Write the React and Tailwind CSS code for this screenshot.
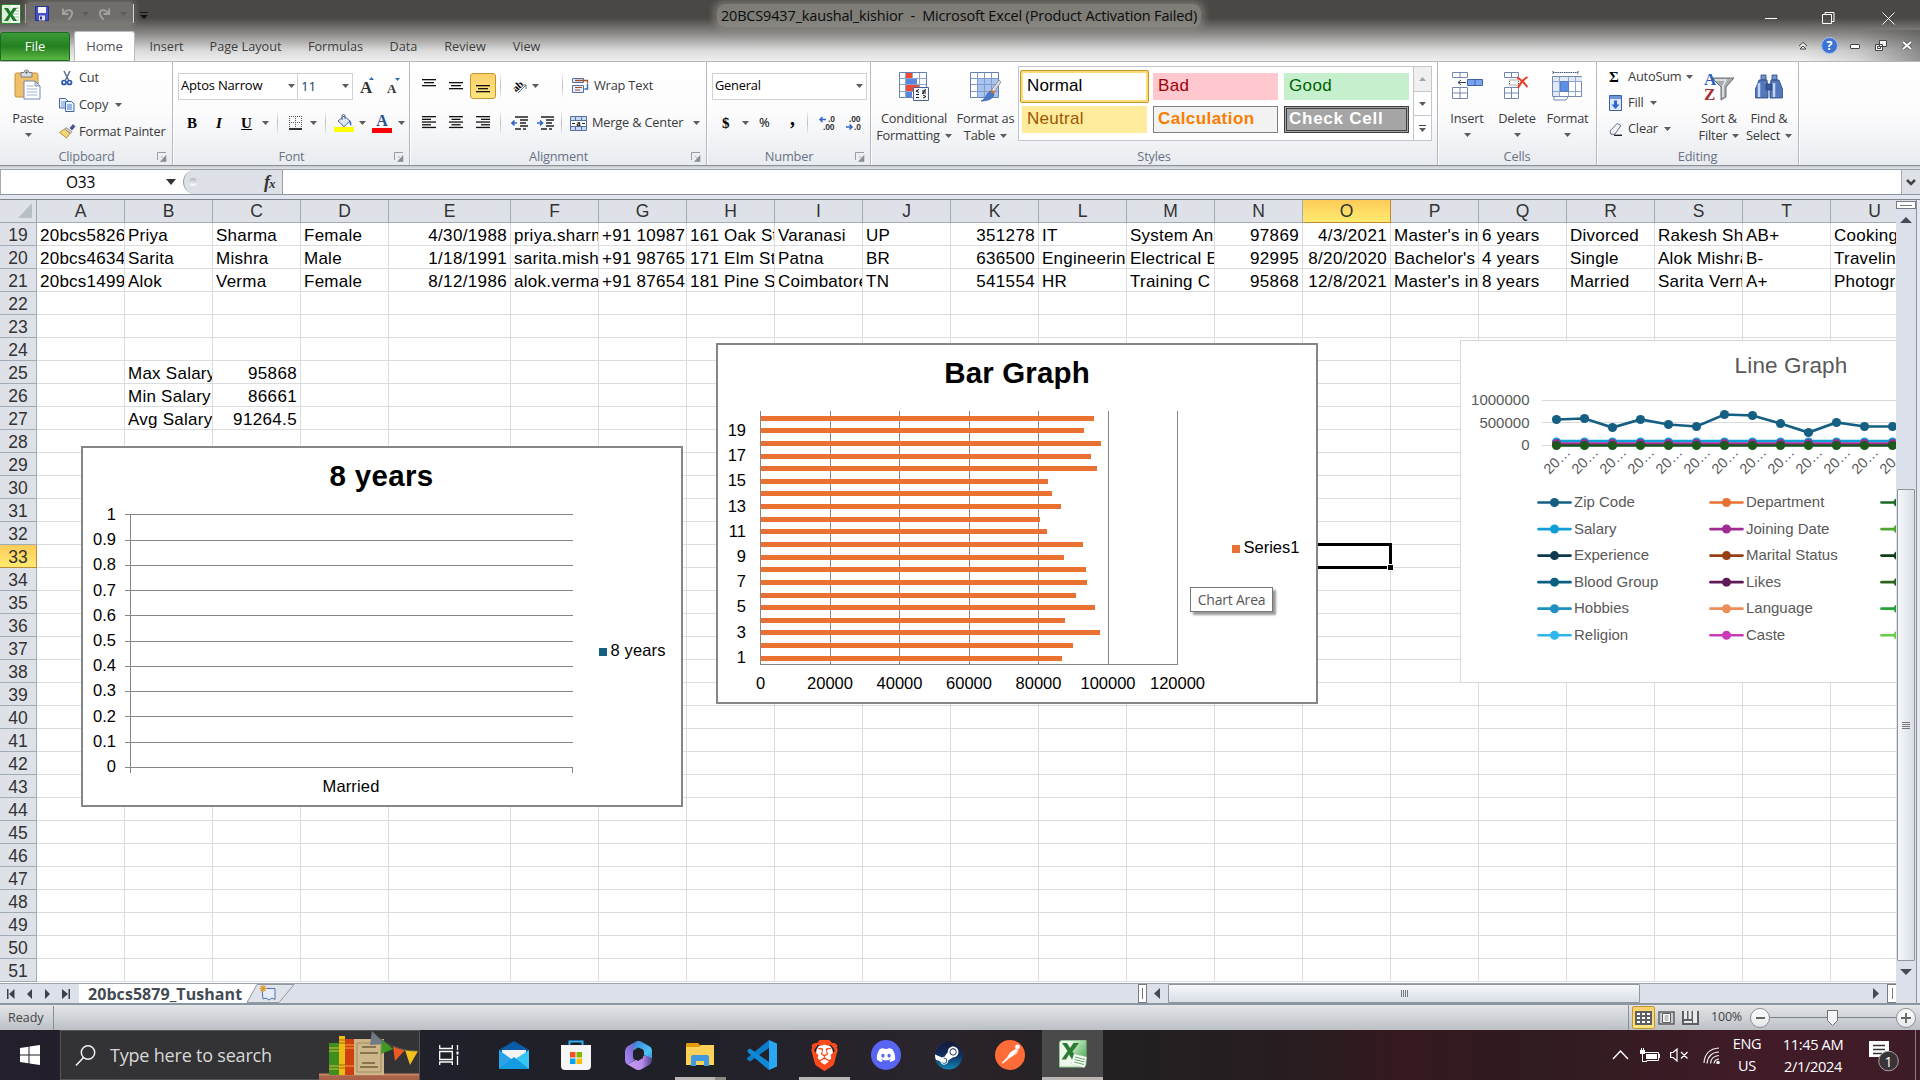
import React from 'react';
import { FaDiscord, FaSteam } from 'react-icons/fa';
import { SiBrave } from 'react-icons/si';

const UI = "font-['Open_Sans','Noto_Sans',sans-serif]";
const ARIAL = "font-['Liberation_Sans',Arial,sans-serif]";

const Caret = ({ className = '' }) => (
  <svg width="7" height="4" viewBox="0 0 7 4" className={`shrink-0 ${className}`}>
    <path d="M0 0h7L3.5 4z" fill="#5c5c5c" />
  </svg>
);

const Sep = ({ className = '' }) => (
  <div className={`h-[24px] w-px shrink-0 bg-gradient-to-b from-[#f3f4f6] via-[#b9bdc3] to-[#f3f4f6] ${className}`} />
);

const Launcher = () => (
  <svg width="10" height="10" viewBox="0 0 10 10">
    <path d="M.5 8V.5H9" stroke="#9a9da2" fill="none" />
    <path d="M4 4l3 3M9 3.500v6H3.500z" stroke="#8a8d92" fill="#8a8d92" strokeWidth=".6" />
  </svg>
);

function Group({ width, label, launcher, children }) {
  return (
    <div className={`flex h-full shrink-0 flex-col border-r border-[#b4b9c1] shadow-[1px_0_0_#fff] ${width}`}>
      <div className="h-[84px]">{children}</div>
      <div className="flex h-[20px] items-center pt-[3px]">
        <div className={`flex-1 text-center text-[12.800px] text-[#6a7285] ${launcher ? 'pl-[16px]' : ''}`}>{label}</div>
        {launcher && <div className="mr-[5px] w-[10px]"><Launcher /></div>}
      </div>
    </div>
  );
}

/* ---------- ribbon icons ---------- */
const PasteIcon = () => (
  <svg width="30" height="32" viewBox="0 0 30 32">
    <rect x="2" y="4" width="23" height="24" rx="1.500" fill="#f0bf6a" stroke="#c98f3a" />
    <path d="M8 3.500h3a2.500 2.500 0 015 0h3V8H8z" fill="#d8dbe0" stroke="#6d7480" strokeWidth=".9" />
    <circle cx="13.500" cy="3.500" r="1" fill="#444" />
    <path d="M11 12h11l5 5v13H11z" fill="#fff" stroke="#6f88b5" />
    <path d="M22 12v5h5z" fill="#cbd8ec" stroke="#6f88b5" strokeWidth=".8" />
    <path d="M13.500 17h7M13.500 20h11M13.500 23h11M13.500 26h11" stroke="#9fb3d6" />
  </svg>
);
const CutIcon = () => (
  <svg width="12" height="15" viewBox="0 0 12 15" fill="none">
    <path d="M3 0l4.500 9M9 0L4.500 9" stroke="#5c6f94" strokeWidth="1.500" />
    <circle cx="3" cy="11.500" r="2" stroke="#2b56a8" strokeWidth="1.700" />
    <circle cx="8.500" cy="11.500" r="2" stroke="#2b56a8" strokeWidth="1.700" />
  </svg>
);
const CopyIcon = () => (
  <svg width="16" height="14" viewBox="0 0 16 14">
    <path d="M.5.5h6l2.500 2.500v7H.5z" fill="#eef4fd" stroke="#3c66b0" />
    <path d="M2 4h4M2 6h4M2 8h4" stroke="#6d93d2" />
    <path d="M6.500 3.500h6L15 6v7.500H6.500z" fill="#eef4fd" stroke="#3c66b0" />
    <path d="M8 7h5M8 9h5M8 11h5" stroke="#4a78c8" />
  </svg>
);
const PainterIcon = () => (
  <svg width="17" height="15" viewBox="0 0 17 15">
    <path d="M11 4l3-3.500 2 2L13 6z" fill="#4c4f9a" stroke="#34376f" strokeWidth=".6" />
    <path d="M7 3.500l6 4-1.500 2-6-4z" fill="#c9ccd2" stroke="#777" strokeWidth=".6" />
    <path d="M5.500 5L11 9.500 7.500 14 .5 8.500z" fill="#f3d778" stroke="#a8842c" strokeWidth=".8" />
  </svg>
);
const Lines = ({ widths, align = 'left', gap = 3 }) => (
  <svg width="14" height={widths.length * gap} viewBox={`0 0 14 ${widths.length * gap}`}>
    {widths.map((w, i) => (
      <rect key={i} x={align === 'left' ? 0 : align === 'right' ? 14 - w : (14 - w) / 2} y={i * gap} width={w} height="1.300" fill="#111" />
    ))}
  </svg>
);
const IndentIcon = ({ flip }) => (
  <svg width="17" height="14" viewBox="0 0 17 14">
    <path d="M4 1h13M9 4h8M9 7h6M9 10h8M4 13h6M12 13h3" stroke="#222" strokeWidth="1.400" />
    <path d={flip ? 'M0 7h5M3 4.500L5.500 7 3 9.500' : 'M1 7h5M3.500 4.500L1 7l2.500 2.500'} stroke="#2f66c4" strokeWidth="1.600" fill="none" />
  </svg>
);
const WrapIcon = () => (
  <svg width="17" height="16" viewBox="0 0 17 16" fill="none">
    <path d="M.5.5h11v4H.5z" fill="#e7eef9" stroke="#56709f" />
    <path d="M3 2.500h12.500v3" stroke="#a0522d" strokeWidth="1.300" />
    <path d="M.5 7.500h11v7H.5z" fill="#e7eef9" stroke="#56709f" />
    <path d="M3 9.500h7M3 12h5" stroke="#a0522d" strokeWidth="1.200" />
    <path d="M15.500 6v5h-3" stroke="#2f66c4" strokeWidth="1.400" />
  </svg>
);
const MergeIcon = () => (
  <svg width="17" height="15" viewBox="0 0 17 15">
    <path d="M.5.5h16v14H.5z" fill="#c8d9f3" stroke="#56709f" />
    <path d="M1 4.500h15M1 10.500h15M5.500 1v3M11.500 1v3M5.500 11v3M11.500 11v3" stroke="#56709f" />
    <path d="M1 5h15v5H1z" fill="#fff" />
    <text x="8.500" y="10" fontSize="8" fontWeight="bold" textAnchor="middle" fontFamily="Liberation Serif, serif">a</text>
    <path d="M2 7.500h3M12 7.500h3" stroke="#222" />
  </svg>
);
const BordersIcon = () => (
  <svg width="13" height="14" viewBox="0 0 13 14">
    <path d="M.5 0v12M6.500 0v12M12.500 0v12M0 .5h13M0 6.500h13" stroke="#555" strokeDasharray="1 1" />
    <path d="M0 13h13" stroke="#000" strokeWidth="1.600" />
  </svg>
);
const BucketIcon = () => (
  <svg width="20" height="19" viewBox="0 0 20 19">
    <path d="M4 7l6-5 6 5-6 5.500z" fill="#dfe7f3" stroke="#4d6794" />
    <path d="M8 6V2a1.500 1.500 0 013 0v3" stroke="#4d6794" fill="none" />
    <path d="M15.500 6c2.500 2 2 5 1.500 6-1-1-2-3-1.500-6z" fill="#2f66c4" />
    <path d="M0 13h20v5H0z" fill="#ffff00" />
  </svg>
);
const FontColorIcon = () => (
  <svg width="20" height="19" viewBox="0 0 20 19">
    <text x="10" y="12" fontSize="16" fontWeight="bold" textAnchor="middle" fill="#2c4f93" fontFamily="Liberation Serif, serif">A</text>
    <path d="M0 14h20v5H0z" fill="#fb0007" />
  </svg>
);
const CondIcon = () => (
  <svg width="31" height="30" viewBox="0 0 31 30">
    <path d="M.5.5h27v25H.5z" fill="#fff" stroke="#6481b4" />
    <path d="M7 1h6v5H7zM7 13h13v6H7z" fill="#ee4a36" />
    <path d="M7 7h11v5H7zM7 20h6v5H7z" fill="#5a86e0" />
    <path d="M1 6.500h26M1 12.500h26M1 19.500h26M6.500 1v25M13.500 1v6M20.500 1v25" stroke="#8ea5cf" fill="none" />
    <path d="M14.500 15.500h15v13h-15z" fill="#f7f9fc" stroke="#4b628f" />
    <path d="M20 17.500l-3 1.500 3 1.500M17 22.500h3M23 19h4M23 21h4M26.500 17l-3 5M17 25.500h3M24 23l3 1.500-3 1.500" stroke="#111" fill="none" />
  </svg>
);
const TableIcon = () => (
  <svg width="31" height="30" viewBox="0 0 31 30">
    <path d="M.5.5h28v25H.5z" fill="#fff" stroke="#6481b4" />
    <path d="M7 7h21v18H7z" fill="#a9c4f1" />
    <path d="M1 6.500h27M1 12.500h27M1 19.500h27M7.500 1v25M14.500 1v25M21.500 1v25" stroke="#7f9acb" fill="none" />
    <path d="M29 8l2 2-8 12-3-2z" fill="#d9dbde" stroke="#77797d" strokeWidth=".7" />
    <path d="M20 19l4 3c-1 5-6 7-13 7 5-2 5-7 9-10z" fill="#4a78c8" stroke="#2b4f93" strokeWidth=".6" />
    <path d="M21.500 17.500l3.500 2.500-1.500 2-3.500-2.500z" fill="#c9743a" />
  </svg>
);
const InsertIcon = () => (
  <svg width="31" height="28" viewBox="0 0 31 28">
    <path d="M.5.5h15v5H.5zM8 .5v5M.5 15.500h15v11H.5zM8 15.500v11M.5 21h15" fill="#fff" stroke="#7388ae" />
    <path d="M15.500 7.500h15v6h-15zM23 7.500v6" fill="#79a5ee" stroke="#3f63a8" />
    <path d="M14 10.500H6M9 8l-3 2.500L9 13" stroke="#333f5c" fill="none" />
  </svg>
);
const DeleteIcon = () => (
  <svg width="26" height="28" viewBox="0 0 26 28">
    <path d="M.5.5h14v5H.5zM7.500.5v5M.5 15.500h14v11H.5zM7.500 15.500v11M.5 21h14" fill="#fff" stroke="#7388ae" />
    <path d="M5.500 8h9v5h-9z" stroke="#556" strokeDasharray="1 1" fill="none" />
    <path d="M13 5.500C17 7 20 11 23.500 15M23.500 5C19 8 16 11 14 16" stroke="#e8402a" strokeWidth="2" fill="none" />
  </svg>
);
const FormatIcon = () => (
  <svg width="31" height="30" viewBox="0 0 31 30">
    <path d="M1 1.500h25M1 0v3M26 0v3" stroke="#3d4f78" strokeDasharray="1.500 .7" />
    <path d="M.5 5.500h29v20H.5z" fill="#fff" stroke="#7388ae" />
    <path d="M1 6h29v4H1zM1 6h6v19H1z" fill="#e1e9f6" />
    <path d="M1 10.500h29M1 20.500h29M7.500 6v19M16.500 6v19M23.500 6v19" stroke="#8ea5cf" fill="none" />
    <path d="M8.500 10.500h8v10h-8z" fill="#5d8fe6" stroke="#5b7dbb" />
    <path d="M2 26v3h12l2-3" fill="#fff" stroke="#7388ae" />
  </svg>
);
const SortIcon = () => (
  <svg width="31" height="30" viewBox="0 0 31 30">
    <path d="M8 6h22l-8 9v10l-5 3V15z" fill="#a9abae" stroke="#6b6d70" />
    <path d="M11 8h11l-3 6v11" fill="none" stroke="#e9eaec" strokeWidth="1.500" />
    <text x="0" y="13" fontSize="17" fontWeight="bold" fill="#2d5fbd" fontFamily="Liberation Serif, serif">A</text>
    <text x="0" y="28" fontSize="17" fontWeight="bold" fill="#a92f34" fontFamily="Liberation Serif, serif">Z</text>
  </svg>
);
const FindIcon = () => (
  <svg width="28" height="27" viewBox="0 0 28 27">
    <g stroke="#2b4780" strokeWidth=".8">
      <path d="M6 2h5v5H6zM17 2h5v5h-5z" fill="#6f93d1" />
      <path d="M4 7h8l1 8v10H.5V16zM24 7h-8l-1 8v10h12.500V16z" fill="#5377bb" />
      <path d="M11 11h6v6h-6z" fill="#38579a" />
    </g>
    <path d="M4 10v14M19 10v14" stroke="#c4d6f5" strokeWidth="2.500" />
  </svg>
);
const FillIcon = () => (
  <svg width="13" height="16" viewBox="0 0 13 16">
    <path d="M.5.5h12v15H.5z" fill="#dce8fa" stroke="#3b60a8" />
    <path d="M1 1h11v3H1z" fill="#6d94d8" />
    <path d="M6.500 14L2.500 9.500H5v-4h3v4h2.500z" fill="#2a66d0" />
  </svg>
);
const EraserIcon = () => (
  <svg width="14" height="13" viewBox="0 0 14 13">
    <path d="M1 8l7-7.500 4 2-6 8.500-4 .5z" fill="#f3f5f9" stroke="#64718e" />
    <path d="M5 12.300h8" stroke="#111" strokeWidth="1.300" />
  </svg>
);
const DecimalIcon = ({ more }) => (
  <svg width="17" height="14" viewBox="0 0 17 14" fontFamily="Liberation Sans, sans-serif" fontSize="8.500" fontWeight="bold" fill="#333">
    <text x={more ? 9 : 4} y="6">{more ? '.0' : '.00'}</text>
    <text x={more ? 4 : 9} y="13.500">{more ? '.00' : '.0'}</text>
    {more ? <path d="M1 3.500h6M3.500 1L1 3.500 3.500 6" stroke="#2f66c4" strokeWidth="1.500" fill="none" /> : <path d="M1 11h6M4.500 8.500L7 11l-2.500 2.500" stroke="#2f66c4" strokeWidth="1.500" fill="none" />}
  </svg>
);

const Label = ({ children, className = '' }) => <div className={`shrink-0 overflow-visible whitespace-nowrap ${className}`}>{children}</div>;

function BigButton({ icon, lines, className, caretBelow }) {
  return (
    <div className={`flex shrink-0 flex-col items-center pt-[10px] ${className}`}>
      <div className="flex h-[38px] items-start justify-center">{icon}</div>
      <div className="h-[17px] whitespace-nowrap leading-[17px]">{lines[0]}</div>
      {caretBelow ? <Caret className="mt-[6px]" /> : (
        <div className="flex h-[17px] items-center whitespace-nowrap leading-[17px]">{lines[1]}<Caret className="ml-[5px]" /></div>
      )}
    </div>
  );
}

function TitleBar() {
  return (
    <div className="flex h-[31px] items-start">
      <div className="flex h-[31px] w-[240px] items-center">
        <svg width="20" height="20" viewBox="0 0 20 20" className="mb-[4px] ml-[1px]">
          <rect x=".5" y=".5" width="19" height="19" rx="1.500" fill="#dff0d9" stroke="#2b8a2b" />
          <path d="M10 1h9v18h-9z" fill="#fff" /><path d="M12 4h6M12 7h6M12 10h6M12 13h6M12 16h6" stroke="#8dc78a" />
          <path d="M3 4h4l2.500 4L12 4h4l-4.500 6.500L16 17h-4l-2.500-4.500L7 17H3l4.500-6.500z" fill="#1d7a2b" />
        </svg>
        <div className="mb-[4px] ml-[4px] h-[19px] w-[2px] border-l border-[#b5b5b5] bg-[#555]" />
        <div className="mb-[4px] flex h-[24px] w-[106px] items-center rounded bg-[#8b8986]/60 shadow-[0_0_5px_3px_rgba(139,137,134,0.45)]">
          <svg width="14" height="15" viewBox="0 0 14 15" className="ml-[8px]">
            <path d="M.5.5h13v14H.5z" fill="#4551c4" stroke="#262f8c" /><path d="M3 1h8v6H3z" fill="#f4f6fc" /><path d="M4 9.500h6v5H4z" fill="#dfe3ef" /><path d="M5 10.500h2v3H5z" fill="#262f8c" />
          </svg>
          <svg width="13" height="14" viewBox="0 0 14 14" className="ml-[12px] opacity-60"><path d="M2 1v6h6M2 7c4-6 10-5 10-1 0 3-2 5-4 7" fill="none" stroke="#c3c3c3" strokeWidth="2" /></svg>
          <Caret className="ml-[8px]" />
          <svg width="13" height="14" viewBox="0 0 14 14" className="ml-[9px] opacity-60"><path d="M12 1v6H6M12 7C8 1 2 2 2 6c0 3 2 5 4 7" fill="none" stroke="#c3c3c3" strokeWidth="2" /></svg>
          <Caret className="ml-[9px]" />
        </div>
        <div className="mb-[4px] h-[19px] w-[2px] border-l border-[#d5d5d5] bg-[#555]" />
        <svg width="8" height="7" viewBox="0 0 8 7" className="ml-[5px]"><path d="M0 .5h8" stroke="#111" /><path d="M0 3h8L4 7z" fill="#111" /></svg>
      </div>
      <div className="flex flex-1 justify-center pt-[4px]">
        <div className="ml-[-2px] whitespace-pre rounded-lg bg-[#96948f]/70 px-[4px] text-[14.500px] leading-[23px] tracking-[-0.160px] text-[#0c0c0c] shadow-[0_0_6px_4px_rgba(150,148,143,0.5)]">20BCS9437_kaushal_kishior  -  Microsoft Excel (Product Activation Failed)</div>
      </div>
      <div className="flex h-[36px] w-[240px] items-center">
        <div className="ml-[85px] h-px w-[12px] bg-white" />
        <svg width="13" height="13" viewBox="0 0 13 13" className="ml-[45px]" fill="none" stroke="#fff"><path d="M.5 2.500h9v9h-9zM3 2.500V.5h9v9h-2.500" /></svg>
        <svg width="13" height="13" viewBox="0 0 13 13" className="ml-[47px]" stroke="#fff"><path d="M.5.500l12 12M12.500.500l-12 12" /></svg>
      </div>
    </div>
  );
}

const tabs = [
  ['Insert', 'w-[33px] ml-[15px]'],
  ['Page Layout', 'w-[71px] ml-[27px]'],
  ['Formulas', 'w-[53px] ml-[28px]'],
  ['Data', 'w-[27px] ml-[28px]'],
  ['Review', 'w-[40px] ml-[28px]'],
  ['View', 'w-[27px] ml-[28px]'],
];

function TabStrip() {
  return (
    <div className="flex h-[30px] items-end">
      <div className="flex h-[29px] w-[70px] items-center justify-center rounded-t-[3px] border border-[#1d6b1f] bg-gradient-to-b from-[#3c9a3b] via-[#22801f] to-[#5cb845] text-[13px] text-white">File</div>
      <div className="ml-[4px] flex h-[30px] w-[61px] items-center justify-center rounded-t-[3px] border border-b-0 border-[#b8bcc3] bg-white text-[13px] text-[#4d5158]">Home</div>
      {tabs.map(([t, w]) => <div key={t} className={`flex h-[29px] items-center justify-center whitespace-nowrap pt-px text-[12.700px] text-[#3d3d3d] ${w}`}>{t}</div>)}
      <div className="flex-1" />
      <div className="flex h-[31px] w-[121px] items-center bg-gradient-to-r from-transparent via-[#777]/20 to-[#555]/60">
        <svg width="10" height="8" viewBox="0 0 10 8" className="ml-[-1px]"><path d="M1 4l4-3.500L9 4M2 7l3-3 3 3z" fill="#eee" stroke="#444" /></svg>
        <svg width="17" height="17" viewBox="0 0 17 17" className="ml-[13px]"><circle cx="8.500" cy="8.500" r="8" fill="#3d74d4" stroke="#a9c3ee" /><text x="8.500" y="13" textAnchor="middle" fontSize="12.500" fontWeight="bold" fill="#fff" fontFamily="Open Sans, sans-serif">?</text></svg>
        <div className="ml-[12px] mt-[2px] h-[5px] w-[10px] rounded-[1px] border border-[#444] bg-white" />
        <svg width="12" height="11" viewBox="0 0 12 11" className="ml-[15px]"><path d="M4.500.5h7v6h-7zM.5 4.500h7v6h-7z" fill="#f5f5f5" stroke="#444" /><path d="M2.500 6.500h3v2h-3z" fill="none" stroke="#444" /></svg>
        <svg width="10" height="9" viewBox="0 0 10 9" className="ml-[15px]"><path d="M1 1l8 7M9 1L1 8" stroke="#555" strokeWidth="3.500" /><path d="M1 1l8 7M9 1L1 8" stroke="#fff" strokeWidth="2" /></svg>
      </div>
    </div>
  );
}

function Ribbon() {
  return (
    <div className="flex h-[105px] border-b border-t border-b-[#8b9097] border-t-[#b4b8be] bg-gradient-to-b from-white via-[#fcfcfd] to-[#e8ebef] text-[12.800px] tracking-[-0.200px] text-[#3a3a3a]">
      <Group width="w-[173px]" label="Clipboard" launcher>
        <div className="flex">
          <BigButton icon={<div className="mt-[-3px]"><PasteIcon /></div>} lines={['Paste']} caretBelow className="w-[56px]" />
          <div className="ml-[3px] flex flex-col pt-[3px]">
            <div className="flex h-[26px] items-center"><div className="w-[20px] pl-[2px]"><CutIcon /></div>Cut</div>
            <div className="flex h-[27px] items-center"><div className="w-[20px]"><CopyIcon /></div>Copy<Caret className="ml-[7px]" /></div>
            <div className="flex h-[27px] items-center"><div className="w-[20px]"><PainterIcon /></div><Label>Format Painter</Label></div>
          </div>
        </div>
      </Group>

      <Group width="w-[237px]" label="Font" launcher>
        <div className="flex h-[48px] items-center pl-[5px]">
          <div className="flex h-[27px] w-[120px] items-center border border-[#cfd1d5] bg-white pl-[2px] text-[13px] text-black"><Label className="w-[107px]">Aptos Narrow</Label><Caret /></div>
          <div className="ml-[-1px] flex h-[27px] w-[56px] items-center border border-[#cfd1d5] bg-white pl-[3px] text-[13.500px] text-[#1c3d6e]"><Label className="w-[41px]">11</Label><Caret /></div>
          <svg width="42" height="20" viewBox="0 0 42 20" className="ml-[7px]" fontFamily="Liberation Serif, serif" fontWeight="bold" fill="#333">
            <text x="0" y="17" fontSize="17">A</text><path d="M9 4h5l-2.500-3z" fill="#2f66c4" />
            <text x="27" y="17" fontSize="13">A</text><path d="M35 2h5l-2.500 3z" fill="#2f66c4" />
          </svg>
        </div>
        <div className="flex h-[26px] items-center pl-[14px] font-['Liberation_Serif',serif] text-[15px] tracking-normal text-black">
          <b className="w-[29px]">B</b><b className="w-[25px] italic">I</b><b className="w-[21px] underline">U</b><Caret />
          <Sep className="ml-[8px] mr-[11px]" /><BordersIcon /><Caret className="ml-[8px]" />
          <Sep className="ml-[8px] mr-[8px]" /><BucketIcon /><Caret className="ml-[5px]" /><div className="ml-[6px]"><FontColorIcon /></div><Caret className="ml-[6px]" />
        </div>
      </Group>

      <Group width="w-[297px]" label="Alignment" launcher>
        <div className="flex h-[48px] items-center pl-[12px]">
          <div className="mb-[6px]"><Lines widths={[14, 10, 14]} align="center" /></div>
          <div className="ml-[13px]"><Lines widths={[14, 10, 14]} align="center" /></div>
          <div className="ml-[7px] flex h-[26px] w-[26px] items-end justify-center rounded-[3px] border border-[#c2962f] bg-gradient-to-b from-[#fdd06c] to-[#fee57e] pb-[4px]"><Lines widths={[14, 10, 14]} align="center" /></div>
          <Sep className="ml-[4px] mr-[11px]" />
          <svg width="16" height="15" viewBox="0 0 16 15"><text x="1" y="10" fontSize="10.500" fontWeight="bold" fontFamily="Liberation Serif, serif" transform="rotate(-42 7 8)">ab</text><path d="M6 14l8-8M14 10V6h-4" stroke="#777" fill="none" /></svg>
          <Caret className="ml-[4px]" />
          <Sep className="ml-[23px] mr-[9px]" /><WrapIcon /><Label className="ml-[5px]">Wrap Text</Label>
        </div>
        <div className="flex h-[26px] items-center pl-[12px]">
          <Lines widths={[14, 9, 14, 9, 14]} gap={2.7} />
          <div className="ml-[13px]"><Lines widths={[14, 9, 14, 9, 14]} align="center" gap={2.7} /></div>
          <div className="ml-[13px]"><Lines widths={[14, 9, 14, 9, 14]} align="right" gap={2.7} /></div>
          <Sep className="ml-[10px] mr-[10px]" /><IndentIcon /><div className="ml-[9px]"><IndentIcon flip /></div>
          <Sep className="ml-[7px] mr-[8px]" /><MergeIcon /><Label className="ml-[5px] w-[101px]">Merge &amp; Center</Label><Caret />
        </div>
      </Group>

      <Group width="w-[164px]" label="Number" launcher>
        <div className="flex h-[48px] items-center pl-[5px]">
          <div className="flex h-[27px] w-[155px] items-center border border-[#cfd1d5] bg-white pl-[2px] text-black"><Label className="w-[141px]">General</Label><Caret /></div>
        </div>
        <div className="flex h-[26px] items-center pl-[15px] text-black">
          <b className="w-[20px] font-['Liberation_Serif',serif] text-[15px]">$</b><Caret />
          <div className="ml-[10px] w-[31px] text-[13px]">%</div><b className="mt-[-10px] w-[17px] font-['Liberation_Serif',serif] text-[20px]">,</b>
          <Sep className="ml-0 mr-[11px]" /><DecimalIcon more /><div className="ml-[9px]"><DecimalIcon /></div>
        </div>
      </Group>

      <Group width="w-[567px]" label="Styles">
        <div className="flex">
          <BigButton icon={<CondIcon />} lines={['Conditional', 'Formatting']} className="w-[86px]" />
          <BigButton icon={<TableIcon />} lines={['Format as', 'Table']} className="w-[57px]" />
          <div className={`ml-[4px] mt-[4px] flex h-[75px] w-[414px] border border-[#c3c6cb] bg-white text-[17px] tracking-[0.100px] ${ARIAL}`}>
            <div className="grid w-[394px] grid-cols-[129px_125px_125px] grid-rows-[32px_32px] gap-x-[4px] pl-[1px] pt-[3px]">
              <div className="flex h-[33px] items-center rounded-[2px] border border-[#c2962f] bg-[#fedd78] p-[2px]"><div className="flex h-full w-full items-center bg-white pb-px pl-[4px] text-black">Normal</div></div>
              <div className="mt-[3px] flex h-[27px] items-center bg-[#ffc7ce] pb-px pl-[5px] tracking-[0.400px] text-[#9c0006]">Bad</div>
              <div className="ml-[2px] mt-[3px] flex h-[27px] w-[125px] items-center bg-[#c6efce] pb-px pl-[5px] tracking-[0.400px] text-[#006100]">Good</div>
              <div className="ml-[2px] mt-[4px] flex h-[27px] w-[125px] items-center bg-[#ffeb9c] pb-px pl-[5px] tracking-[0.300px] text-[#9c5700]">Neutral</div>
              <div className="mt-[4px] flex h-[27px] items-center border border-[#7f7f7f] bg-[#f2f2f2] pb-px pl-[4px] font-bold tracking-[0.450px] text-[#fa7d00]">Calculation</div>
              <div className="ml-[2px] mt-[4px] flex h-[27px] w-[125px] items-center border-[3px] border-double border-[#3f3f3f] bg-[#a5a5a5] pb-px pl-[2px] font-bold tracking-[0.750px] text-white">Check Cell</div>
            </div>
            <div className="flex w-[18px] flex-col border-l border-[#c3c6cb]">
              <div className="flex h-[25px] items-center justify-center border-b border-[#c3c6cb] bg-[#f0f0f1]"><Caret className="rotate-180 opacity-50" /></div>
              <div className="flex h-[24px] items-center justify-center border-b border-[#c3c6cb]"><Caret /></div>
              <div className="flex flex-1 flex-col items-center justify-center gap-[2px]"><div className="h-px w-[7px] bg-[#444]" /><Caret /></div>
            </div>
          </div>
        </div>
      </Group>

      <Group width="w-[159px]" label="Cells">
        <div className="flex pl-[4px]">
          <BigButton icon={<InsertIcon />} lines={['Insert']} caretBelow className="w-[50px]" />
          <BigButton icon={<DeleteIcon />} lines={['Delete']} caretBelow className="w-[50px]" />
          <BigButton icon={<div className="mt-[-1px]"><FormatIcon /></div>} lines={['Format']} caretBelow className="w-[51px]" />
        </div>
      </Group>

      <Group width="w-[202px]" label="Editing">
        <div className="flex pl-[12px]">
          <div className="flex w-[88px] flex-col pt-[2px]">
            <div className="flex h-[26px] items-center"><div className="w-[19px] font-['Liberation_Serif',serif] text-[15px] font-bold text-black">Σ</div>AutoSum<Caret className="ml-[4px]" /></div>
            <div className="flex h-[26px] items-center"><div className="w-[19px]"><FillIcon /></div>Fill<Caret className="ml-[6px]" /></div>
            <div className="flex h-[26px] items-center"><div className="w-[19px]"><EraserIcon /></div>Clear<Caret className="ml-[6px]" /></div>
          </div>
          <BigButton icon={<SortIcon />} lines={['Sort &', 'Filter']} className="w-[44px]" />
          <BigButton icon={<div className="mt-[1px]"><FindIcon /></div>} lines={['Find &', 'Select']} className="w-[56px]" />
        </div>
      </Group>
    </div>
  );
}

function FormulaBar() {
  return (
    <div className="flex h-[34px] flex-col bg-[#dfe3ea]">
      <div className="h-[4px] border-b border-[#9aa0a8] bg-gradient-to-b from-[#c5c9cf] to-[#e2e5ea]" />
      <div className="flex h-[25px] border-b border-[#8f959e] bg-white">
        <div className="flex w-[183px] items-center border-l border-[#a6abb2]">
          <div className="w-[159px] pt-px text-center text-[15.500px] tracking-[-0.200px] text-black">O33</div>
          <svg width="10" height="6" viewBox="0 0 10 6" className="ml-[6px]"><path d="M0 0h10L5 6z" fill="#333" /></svg>
        </div>
        <div className="flex w-[100px] items-center rounded-l-full border-l border-r border-[#9aa0a8] bg-[#dde1e7]">
          <div className="ml-[5px] h-[8px] w-[8px] rounded-full bg-gradient-to-b from-[#b5b9bf] to-white" />
          <div className="ml-[67px] font-['Liberation_Serif',serif] text-[18px] font-bold italic tracking-[-1px] text-[#333]">f<span className="text-[13px]">x</span></div>
        </div>
        <div className="flex-1" />
        <div className="flex w-[19px] items-center justify-center border-l border-[#a6abb2] bg-[#dde1e7]">
          <svg width="10" height="7" viewBox="0 0 10 7"><path d="M1 1l4 4 4-4" fill="none" stroke="#444" strokeWidth="2.500" /></svg>
        </div>
      </div>
      <div className="h-[5px] border-b border-[#7e848d] bg-[#e3e6f0]" />
    </div>
  );
}

const cols = 'ABCDEFGHIJKLMNOPQRSTU'.split('');
const colW = (c) => (c === 'E' ? 'w-[122px]' : 'w-[88px]');
const data = {
  19: ['20bcs5826', 'Priya', 'Sharma', 'Female', '>4/30/1988', 'priya.sharma', '+91 10987', '161 Oak St', 'Varanasi', 'UP', '>351278', 'IT', 'System An', '>97869', '>4/3/2021', "Master's in", '6 years', 'Divorced', 'Rakesh Sha', 'AB+', 'Cooking'],
  20: ['20bcs4634', 'Sarita', 'Mishra', 'Male', '>1/18/1991', 'sarita.mish', '+91 98765', '171 Elm St', 'Patna', 'BR', '>636500', 'Engineering', 'Electrical E', '>92995', '>8/20/2020', "Bachelor's", '4 years', 'Single', 'Alok Mishra', 'B-', 'Traveling'],
  21: ['20bcs1499', 'Alok', 'Verma', 'Female', '>8/12/1986', 'alok.verma', '+91 87654', '181 Pine St', 'Coimbatore', 'TN', '>541554', 'HR', 'Training C', '>95868', '>12/8/2021', "Master's in", '8 years', 'Married', 'Sarita Verm', 'A+', 'Photogra'],
  25: ['', 'Max Salary', '>95868'],
  26: ['', 'Min Salary', '>86661'],
  27: ['', 'Avg Salary', '>91264.5'],
};
const rowNums = Array.from({ length: 33 }, (_, i) => 19 + i);

function EmptyChart() {
  return (
    <svg width="602" height="361" viewBox="81 446 602 361" className="absolute left-[81px] top-[246px]" fontFamily="Liberation Sans, Arial, sans-serif" fontSize="16.500">
      <rect x="82" y="447" width="600" height="359" fill="#fff" stroke="#868686" strokeWidth="2" />
      <text x="381.500" y="486" textAnchor="middle" fontSize="29.500" fontWeight="bold" letterSpacing=".3">8 years</text>
      <g shapeRendering="crispEdges" stroke="#868686">
        {[514.5, 540.5, 565.5, 590.5, 615.5, 641.5, 666.5, 691.5, 716.5, 742.5, 767.5].map((y) => <path key={y} d={`M125 ${y}H573`} />)}
        <path d="M130.500 514V773M572.500 767V773" />
      </g>
      {['1', '0.9', '0.8', '0.7', '0.6', '0.5', '0.4', '0.3', '0.2', '0.1', '0'].map((t, i) => <text key={t} x="116" y={520 + i * 25.2} textAnchor="end">{t}</text>)}
      <text x="351" y="792" textAnchor="middle" letterSpacing=".15">Married</text>
      <rect x="599" y="648" width="8" height="8" fill="#156082" />
      <text x="610.500" y="655.500" letterSpacing=".15">8 years</text>
    </svg>
  );
}

const bars = [[418, 1094], [430, 1084], [443, 1101], [456, 1091], [468, 1097], [481, 1048], [493, 1052], [506, 1061], [519, 1040], [531, 1047], [544, 1083], [557, 1064], [569, 1086], [582, 1087], [595, 1076], [607, 1095], [620, 1065], [632, 1100], [645, 1073], [658, 1062]];

function BarChart() {
  return (
    <svg width="602" height="361" viewBox="716 343 602 361" className="absolute left-[716px] top-[143px]" fontFamily="Liberation Sans, Arial, sans-serif" fontSize="16.500">
      <rect x="717" y="344" width="600" height="359" fill="#fff" stroke="#868686" strokeWidth="2" />
      <text x="1017" y="383" textAnchor="middle" fontSize="29.500" fontWeight="bold" letterSpacing=".15">Bar Graph</text>
      <g shapeRendering="crispEdges" stroke="#868686">
        {[760.5, 830.5, 899.5, 969.5, 1038.5, 1108.5, 1177.5].map((x) => <path key={x} d={`M${x} 411V665`} />)}
        <path d="M760 664.500H1178" />
        <g stroke="none" fill="#e97132">{bars.map(([y, x]) => <rect key={y} x="761" y={y - 2} width={x - 761} height="5" />)}</g>
      </g>
      {[19, 17, 15, 13, 11, 9, 7, 5, 3, 1].map((n, i) => <text key={n} x="746" y={436 + i * 25.2} textAnchor="end">{n}</text>)}
      {[0, 20000, 40000, 60000, 80000, 100000, 120000].map((n, i) => <text key={n} x={760.5 + i * 69.5} y="689" textAnchor="middle">{n}</text>)}
      <rect x="1232" y="545" width="8" height="8" fill="#e97132" />
      <text x="1243.500" y="552.500">Series1</text>
    </svg>
  );
}

const zips = [419.5, 418.5, 427.5, 419.5, 424.5, 426.5, 414.5, 415.5, 423.5, 432.5, 422.5, 426.5, 426.5];
const legend = [
  ['Zip Code', '#156082', 'Department', '#e97132', '#196b24'],
  ['Salary', '#0f9ed5', 'Joining Date', '#a02b93', '#4ea72e'],
  ['Experience', '#0d3a4e', 'Marital Status', '#983f11', '#0f4016'],
  ['Blood Group', '#095f80', 'Likes', '#601a58', '#2f641c'],
  ['Hobbies', '#1f8fc2', 'Language', '#ed8d5b', '#25a336'],
  ['Religion', '#2fb7ee', 'Caste', '#ca3bba', '#68cc47'],
];

function LineChart() {
  return (
    <svg width="436" height="343" viewBox="1460 340 436 343" className="absolute left-[1460px] top-[140px]" fontFamily="Liberation Sans, Arial, sans-serif" fontSize="15" fill="#595959">
      <rect x="1460.500" y="340.500" width="600" height="342" fill="#fff" stroke="#d9d9d9" />
      <text x="1791" y="373" textAnchor="middle" fontSize="22.500" letterSpacing=".15">Line Graph</text>
      <path d="M1542 400.500H1900M1542 422.500H1900M1542 445.500H1900" stroke="#d9d9d9" />
      <text x="1529.500" y="405" textAnchor="end">1000000</text>
      <text x="1529.500" y="428" textAnchor="end">500000</text>
      <text x="1529.500" y="450" textAnchor="end">0</text>
      <polyline points={zips.map((y, i) => `${1556.5 + i * 28},${y}`).join(' ')} fill="none" stroke="#156082" strokeWidth="2.700" />
      {zips.map((y, i) => <circle key={i} cx={1556.5 + i * 28} cy={y} r="4.600" fill="#156082" />)}
      {zips.map((_, i) => <circle key={i} cx={1556.5 + i * 28} cy="442" r="4.600" fill="#0f9ed5" />)}
      <path d="M1556 441H1900" stroke="#0f9ed5" strokeWidth="2.500" />
      {zips.map((_, i) => <circle key={i} cx={1556.5 + i * 28} cy="443.500" r="4.500" fill="#a02b93" />)}
      <path d="M1556 443.500H1900" stroke="#a02b93" strokeWidth="2.500" />
      <path d="M1556 445.500H1900" stroke="#154d1c" strokeWidth="2.500" />
      {zips.map((_, i) => <circle key={i} cx={1556.5 + i * 28} cy="445.500" r="4.600" fill="#1b5a1c" />)}
      {zips.map((_, i) => <text key={i} transform={`translate(${1549.5 + i * 28} 475) rotate(-45)`} fontSize="14.500">20…</text>)}
      {legend.map(([a, ca, b, cb, cc], i) => {
        const y = 502.5 + i * 26.55;
        return (
          <g key={a}>
            <path d={`M1538.500 ${y}h32`} stroke={ca} strokeWidth="2.700" strokeLinecap="round" /><circle cx="1554.500" cy={y} r="4.500" fill={ca} />
            <text x="1574" y={y + 4.5}>{a}</text>
            <path d={`M1710.500 ${y}h32`} stroke={cb} strokeWidth="2.700" strokeLinecap="round" /><circle cx="1726.500" cy={y} r="4.500" fill={cb} />
            <text x="1746" y={y + 4.5}>{b}</text>
            <path d={`M1881.500 ${y}h32`} stroke={cc} strokeWidth="2.700" strokeLinecap="round" /><circle cx="1898" cy={y} r="4.500" fill={cc} />
          </g>
        );
      })}
    </svg>
  );
}

function Sheet() {
  return (
    <div className={`relative h-[783px] w-[1896px] overflow-hidden bg-white ${ARIAL}`}>
      <div className="flex h-[23px] w-[1920px]">
        <div className="flex w-[37px] shrink-0 items-end justify-end border-b border-r border-[#9ea6b0] bg-[#dee2e8] pb-[4px] pr-[4px]">
          <svg width="14" height="15" viewBox="0 0 14 15"><path d="M14 0v15H0z" fill="#b9bfc7" /></svg>
        </div>
        {cols.map((c) => (
          <div key={c} className={`flex shrink-0 items-center justify-center border-b border-r pt-px text-[17.500px] ${colW(c)} ${c === 'O' ? 'border-[#c28a30] bg-gradient-to-b from-[#fdcb58] to-[#ffeb70] text-[#333]' : 'border-[#a3abb5] bg-[#dee2e8] text-[#333]'}`}>{c}</div>
        ))}
      </div>
      {rowNums.map((r) => (
        <div key={r} className="flex h-[23px] w-[1920px]">
          <div className={`flex w-[37px] shrink-0 items-center justify-center border-b border-r pt-[2px] text-[17.500px] ${r === 33 ? 'border-[#c28a30] bg-gradient-to-b from-[#fdcb58] to-[#ffeb70] text-[#333]' : 'border-[#a3abb5] bg-[#dee2e8] text-[#333]'}`}>{r}</div>
          {cols.map((c, i) => {
            const v = (data[r] && data[r][i]) || '';
            const num = v[0] === '>';
            return <div key={c} className={`flex shrink-0 items-center overflow-hidden whitespace-nowrap border-b border-r border-[#dadcdd] px-[3px] pt-[3px] text-[17px] text-black ${colW(c)} ${num ? 'justify-end tracking-[0.350px]' : 'tracking-[0.250px]'}`}>{num ? v.slice(1) : v}</div>;
          })}
        </div>
      ))}
      <div className="absolute left-[1301px] top-[343px] h-[26px] w-[91px] border-[3px] border-black" />
      <div className="absolute left-[1387px] top-[364px] h-[7px] w-[7px] border border-white bg-black" />
      <EmptyChart />
      <BarChart />
      <LineChart />
      <div className={`absolute left-[1190px] top-[387px] flex h-[25px] w-[83px] items-center justify-center whitespace-nowrap border border-[#767676] bg-white text-[14px] tracking-[-0.200px] text-[#575757] shadow-[3px_3px_2px_rgba(0,0,0,0.4)] ${UI}`}>Chart Area</div>
    </div>
  );
}

function VScroll() {
  return (
    <div className="flex h-[803px] w-[24px] flex-col bg-[#e6e7ef]">
      <div className="flex h-full w-[21px] flex-col items-center border-r border-[#8e939b] bg-[#dce0ea]">
        <div className="mt-[1px] flex h-[8px] w-[20px] items-center justify-center border border-[#767b84] bg-white"><div className="h-px w-[12px] bg-[#777]" /></div>
        <svg width="12" height="6" viewBox="0 0 12 6" className="mt-[8px]"><path d="M0 6h12L6 0z" fill="#444b55" /></svg>
        <div className="mt-[266px] flex h-[472px] w-[18px] items-center justify-center rounded-[1px] border border-[#8e959f] bg-gradient-to-r from-[#f5f7fa] to-[#d9dee7]">
          <div className="flex flex-col gap-[1px]"><div className="h-px w-[8px] bg-[#777]" /><div className="h-px w-[8px] bg-[#777]" /><div className="h-px w-[8px] bg-[#777]" /><div className="h-px w-[8px] bg-[#777]" /></div>
        </div>
        <svg width="12" height="6" viewBox="0 0 12 6" className="mt-[8px]"><path d="M0 0h12L6 6z" fill="#444b55" /></svg>
      </div>
    </div>
  );
}

function SheetTabs() {
  return (
    <div className="flex h-[20px] w-[1896px] items-center border-t border-[#9ea4ad] bg-[#dce0e8]">
      <div className="flex w-[79px] items-center">
        <svg width="72" height="10" viewBox="0 0 72 10" className="ml-[7px]" fill="#3c424c">
          <path d="M0 0h1.500v10H0zM7.500 0v10L2 5zM25 0v10l-5-5zM38 0v10l5-5zM55 0v10l6-5zM61.500 0H63v10h-1.500z" />
        </svg>
      </div>
      <div className="flex h-[19px] w-[166px] items-center bg-white pl-[9px] text-[16px] font-bold tracking-[0.060px] text-[#444a54]">20bcs5879_Tushant</div>
      <svg width="50" height="19" viewBox="0 0 50 19">
        <path d="M0 0h12L2 19H0z" fill="#fff" /><path d="M2 18.500L12 .5h37L34 18.500z" fill="#dfe3ea" stroke="#9299a3" />
        <path d="M17 4.500h13v11l-3-1.500-3 2-3-2-3 1z" fill="#e5ecf8" stroke="#5573ad" /><path d="M18 1v7M14.500 4.500h7M15.500 2l5 5M20.500 2l-5 5" stroke="#e09a2d" strokeWidth="1.200" />
      </svg>
      <div className="flex-1" />
      <div className="flex w-[758px] items-center">
        <div className="flex h-[19px] w-[9px] items-center justify-center border border-[#767b84] bg-white"><div className="h-[11px] w-px bg-[#777]" /></div>
        <svg width="6" height="11" viewBox="0 0 6 11" className="ml-[7px]"><path d="M6 0v11L0 5.500z" fill="#444b55" /></svg>
        <div className="ml-[8px] flex h-[19px] w-[472px] items-center justify-center gap-[1px] rounded-[1px] border border-[#8e959f] bg-gradient-to-b from-[#f5f7fa] to-[#d9dee7]">
          <div className="h-[7px] w-px bg-[#777]" /><div className="h-[7px] w-px bg-[#777]" /><div className="h-[7px] w-px bg-[#777]" /><div className="h-[7px] w-px bg-[#777]" />
        </div>
        <svg width="6" height="11" viewBox="0 0 6 11" className="ml-[233px]"><path d="M0 0v11l6-5.500z" fill="#444b55" /></svg>
        <div className="ml-[8px] flex h-[19px] w-[9px] items-center justify-center border border-r-0 border-[#767b84] bg-white"><div className="h-[11px] w-px bg-[#777]" /></div>
      </div>
    </div>
  );
}

function StatusBar() {
  return (
    <div className="flex h-[27px] items-center border-t-2 border-[#8b97a0] bg-gradient-to-b from-[#e3e5e8] via-[#d0d3d7] to-[#bcc0c4] text-[12.500px] text-[#444]">
      <div className="flex h-[24px] w-[54px] items-center border-r border-[#8a8f95] pl-[8px] pt-px">Ready</div>
      <div className="flex-1" />
      <div className="flex h-full w-[292px] items-center border-l border-[#8a8f95] pl-[3px]">
        <div className="flex h-[23px] w-[23px] items-center justify-center rounded-[2px] border border-[#c2962f] bg-gradient-to-b from-[#fdd06c] to-[#fee57e]">
          <svg width="17" height="14" viewBox="0 0 17 14"><path d="M0 0h17v14H0z" fill="#5d5f63" /><path d="M2 2h3v2H2zM7 2h3v2H7zM12 2h3v2h-3zM2 6h3v2H2zM7 6h3v2H7zM12 6h3v2h-3zM2 10h3v2H2zM7 10h3v2H7zM12 10h3v2h-3z" fill="#fff" /></svg>
        </div>
        <svg width="17" height="14" viewBox="0 0 17 14" className="ml-[3px]"><path d="M1 1h15v12H1z" fill="#c9ccd0" stroke="#5d5f63" strokeWidth="1.500" /><path d="M4.500 2.500h8v9h-8z" fill="#fff" stroke="#5d5f63" /><path d="M6.500 5h4M6.500 7h4M6.500 9h4" stroke="#888" /></svg>
        <svg width="17" height="14" viewBox="0 0 17 14" className="ml-[7px]"><path d="M0 0h17v14H0z" fill="#5d5f63" /><path d="M2 0h3v8H2zM6.500 0h3v8h-3zM11 0h4v12h-4zM2 10h8v2H2z" fill="#e9eaec" /></svg>
        <div className="ml-[12px] w-[39px] tracking-[-0.200px]">100%</div>
        <div className="flex h-[20px] w-[20px] items-center justify-center rounded-full border border-[#8a8f95] bg-gradient-to-b from-white to-[#e5e6e8]"><div className="h-[2px] w-[9px] bg-[#666]" /></div>
        <div className="flex h-[20px] w-[126px] items-center"><div className="h-px w-[57px] bg-[#7b8088]" />
          <svg width="11" height="16" viewBox="0 0 11 16"><path d="M.5.5h10v10l-5 5-5-5z" fill="#f4f5f6" stroke="#6b7077" /></svg>
          <div className="h-px flex-1 bg-[#7b8088]" /></div>
        <div className="flex h-[20px] w-[20px] items-center justify-center rounded-full border border-[#8a8f95] bg-gradient-to-b from-white to-[#e5e6e8]"><svg width="10" height="10" viewBox="0 0 10 10"><path d="M0 5h10M5 0v10" stroke="#666" strokeWidth="1.800" /></svg></div>
      </div>
    </div>
  );
}

const Decor = () => (
  <svg width="100" height="49" viewBox="0 0 100 49">
    <path d="M0 43h100v6H0z" fill="#a9634a" /><path d="M0 42.500h100v2H0z" fill="#c98466" />
    <path d="M10 12h10v32H10z" fill="#3f8f1e" /><path d="M10 17h10M10 20h10M10 35h10M10 38h10" stroke="#d8b93c" />
    <path d="M20 5h6v39h-6z" fill="#eebc16" /><path d="M20 9h6M20 12h6M20 34h6M20 37h6" stroke="#9a6b08" />
    <path d="M26 8h9v36h-9z" fill="#d0400f" /><path d="M26 14h9M26 17h9M26 35h9" stroke="#f0a33c" />
    <path d="M35 8h30v36H35z" fill="#cdb68a" /><path d="M38 12h24v29H38z" fill="none" stroke="#a58c60" />
    <path d="M43 16h14M41 22h18M43 32h13M41 36h18" stroke="#6f5f40" strokeWidth="1.500" />
    <path d="M53 0l14 13-16 1z" fill="#717b85" /><path d="M63 8l11 10-12 5z" fill="#3f9a24" /><path d="M74 15l12 4-10 11z" fill="#ee5a22" /><path d="M86 19l13 1-8 14z" fill="#f3c11c" />
    <path d="M53 0c10 12 25 20 46 20" fill="none" stroke="#555" />
  </svg>
);

const TaskItem = ({ className, children }) => <div className={`flex h-[50px] shrink-0 items-center justify-center ${className}`}>{children}</div>;

function Taskbar() {
  return (
    <div className={`flex h-[50px] bg-[linear-gradient(90deg,#231f2b_0%,#20202a_22%,#1f2028_35%,#2a242c_48%,#231f20_60%,#271d20_67%,#35191f_73%,#2f1b20_80%,#411c28_92%,#3d1b27_100%)] text-white ${UI}`}>
      <TaskItem className="w-[60px]"><svg width="20" height="20" viewBox="0 0 20 20" fill="#fff"><path d="M0 3l8.500-1.200v7.700H0zM9.500 1.600L20 0v9.500H9.500zM0 10.500h8.500v7.700L0 17zM9.500 10.500H20V20L9.500 18.400z" /></svg></TaskItem>
      <div className="flex w-[360px] shrink-0 items-center border border-[#555] bg-[#333234]">
        <svg width="21" height="21" viewBox="0 0 21 21" className="ml-[14px]" fill="none" stroke="#f2f2f2" strokeWidth="1.500"><circle cx="13" cy="7.500" r="6.700" /><path d="M8.500 12.500L1 20.500" /></svg>
        <div className="ml-[14px] w-[209px] whitespace-nowrap text-[18px] tracking-[-0.200px] text-[#d8d8d8]">Type here to search</div>
        <Decor />
      </div>
      <TaskItem className="ml-[1px] w-[57px]"><svg width="21" height="20" viewBox="0 0 21 20" fill="none" stroke="#fff" strokeWidth="1.300"><path d="M.7 0v3.500h12.600V0M.7 6.500h12.600v8H.7zM.7 20v-3h12.600v3M18.500 0v5M18.500 11v9" /><path d="M17.500 6.500h2v3h-2z" fill="#fff" stroke="none" /></svg></TaskItem>
      <TaskItem className="w-[72px]"><svg width="30" height="28" viewBox="0 0 30 28"><path d="M0 9L15 0l15 9v5H0z" fill="#0a5ba8" /><path d="M3 9h24v8L15 20 3 17z" fill="#f2f4f6" /><path d="M0 9l15 11L0 28z" fill="#2aa4e8" /><path d="M30 9L15 19v9h15z" fill="#35c6f5" /><path d="M0 28l15-12 15 12z" fill="#159be0" /></svg></TaskItem>
      <TaskItem className="w-[52px]"><svg width="30" height="30" viewBox="0 0 30 30"><path d="M8.500 6V1.500h13V6" fill="none" stroke="#2fb1ef" strokeWidth="2" /><path d="M0 5h30v21a4 4 0 01-4 4H4a4 4 0 01-4-4z" fill="#f5f5f6" /><path d="M9 12h5.500v5.500H9z" fill="#f25022" /><path d="M15.500 12H21v5.500h-5.500z" fill="#7fba00" /><path d="M9 18.500h5.500V24H9z" fill="#00a4ef" /><path d="M15.500 18.500H21V24h-5.500z" fill="#ffb900" /></svg></TaskItem>
      <TaskItem className="w-[72px]">
        <svg width="27" height="29" viewBox="0 0 27 29">
          <defs>
            <linearGradient id="loopLeft" x1="0" y1="1" x2="1" y2="0"><stop offset="0" stopColor="#b48af0" /><stop offset=".6" stopColor="#7f6fd8" /><stop offset="1" stopColor="#3f78cf" /></linearGradient>
            <linearGradient id="loopRight" x1="0" y1="0" x2="1" y2="1"><stop offset="0" stopColor="#3b7fd8" /><stop offset=".7" stopColor="#4cc3f2" /><stop offset="1" stopColor="#3a8fe0" /></linearGradient>
            <linearGradient id="loopBottom" x1="0" y1="0" x2="1" y2="0"><stop offset="0" stopColor="#c99af2" /><stop offset=".6" stopColor="#b48ce8" /><stop offset="1" stopColor="#4d3f86" /></linearGradient>
          </defs>
          <path d="M12 0L3 5Q0 7 0 10v9q0 3 2.500 4.500L10 19q-2-1-2-4v-4q0-2 2-3z" fill="url(#loopLeft)" />
          <path d="M12 0q2-.5 4 .5l8 4.500q3 1.500 3 5v8l-8-4v-3q0-2-2-3l-4-1.500L9 9q-1-5 3-9z" fill="url(#loopRight)" />
          <path d="M2.500 23.500L19 14.500q4 0 8 3v2q0 2.500-3 4.500l-8 4.500q-2.500 1-5 0z" fill="url(#loopBottom)" />
          <path d="M13 8.500l5 2.500v6l-5 3-4.500-3v-6z" fill="#20202a" />
        </svg>
      </TaskItem>
      <TaskItem className="relative w-[52px]"><svg width="28" height="24" viewBox="0 0 28 24"><path d="M1 0h11l3 3v3H0V1z" fill="#e39b0c" /><path d="M0 4h13l2-2h13v20H0z" fill="#fdd158" /><path d="M5 23V14q0-2 2-2h14q2 0 2 2v9h-5v-5h-8v5z" fill="#3f9ae0" /></svg>
        <div className="absolute bottom-0 left-[1px] flex h-[3px] w-[51px] bg-[#8b8987]"><div className="w-[40px] bg-[#b9b6b4]" /></div></TaskItem>
      <TaskItem className="w-[72px]"><svg width="30" height="30" viewBox="0 0 30 30"><path d="M22 0v8L3 21.500 0 19.500v-1.500z" fill="#0a7cc8" /><path d="M22 30v-8L3 8.500.500 10v2z" fill="#1089d6" /><path d="M22 0l8 3.500v23L22 30z" fill="#2aa7f2" /></svg></TaskItem>
      <TaskItem className="relative w-[52px]"><div className="relative flex items-center justify-center"><div className="absolute h-[23px] w-[17px] rounded-full bg-white" /><SiBrave className="relative text-[#fb4a1c]" size={31} /></div><div className="absolute bottom-0 left-[1px] h-[3px] w-[51px] bg-[#b9b6b4]" /></TaskItem>
      <TaskItem className="w-[72px]"><div className="flex h-[30px] w-[30px] items-center justify-center rounded-full bg-[#5865f2]"><FaDiscord size={20} className="text-white" /></div></TaskItem>
      <TaskItem className="w-[52px]">
        <svg width="0" height="0"><defs><linearGradient id="steamFill" x1="0" y1="0" x2="0" y2="1"><stop offset="0" stopColor="#14173a" /><stop offset=".5" stopColor="#10305e" /><stop offset="1" stopColor="#1387b8" /></linearGradient></defs></svg>
        <div className="flex h-[26px] w-[26px] items-center justify-center rounded-full bg-white"><FaSteam size={29} fill="url(#steamFill)" className="shrink-0" /></div>
      </TaskItem>
      <TaskItem className="w-[72px]">
        <svg width="30" height="30" viewBox="0 0 30 30"><circle cx="15" cy="15" r="15" fill="#ff6c37" /><circle cx="22.500" cy="7" r="2.400" fill="#fff" /><path d="M20.500 9l-5.500 3.500-3 5-5.500 5.500 1.500.5 6-5 4-2.500 4-5 .5-1.500z" fill="#fff" /><path d="M15 15l6-1 2-4" fill="none" stroke="#fff" strokeWidth=".9" /></svg>
      </TaskItem>
      <TaskItem className="relative ml-[-4px] w-[61px] bg-[#4b4a4a]">
        <svg width="28" height="28" viewBox="0 0 28 28" className="mb-[2px]">
          <defs><linearGradient id="xlPane" x1="0" y1="0" x2="1" y2="1"><stop offset="0" stopColor="#d9efd4" /><stop offset="1" stopColor="#4fae5b" /></linearGradient></defs>
          <path d="M.5 3q0-2.500 2.500-2.500h24v23q0 3.500-3 3.500H.5z" fill="#eef7ea" stroke="#8cc98c" />
          <path d="M14 1h13v17H14z" fill="url(#xlPane)" />
          <path d="M3 3h5l3 5 3.500-5H20l-6.500 8.500 4.500 8h-5l-3-5-3 5H2.500l6-8.500z" fill="#2a7c34" />
          <path d="M15 14l12.500 3-2 10.500L12 24z" fill="#fbfdfb" stroke="#b9d8b6" strokeWidth=".5" /><path d="M16 17l10 2.500M15.500 19.500l10 2.500M15 22l10 2.500" stroke="#5aa762" />
        </svg>
        <div className="absolute bottom-0 left-0 h-[3px] w-full bg-[#b9b6b4]" />
      </TaskItem>
      <div className="flex-1" />
      <div className="flex w-[308px] shrink-0 items-center">
        <svg width="17" height="10" viewBox="0 0 17 10" fill="none" stroke="#fff" strokeWidth="1.400"><path d="M1 9l7.500-8L16 9" /></svg>
        <svg width="20" height="14" viewBox="0 0 20 14" className="ml-[11px]"><path d="M4.500 4.500h14v8h-12" fill="none" stroke="#fff" /><path d="M6 6h11v5H6zM19 6h1v4h-1zM0 2h5v4H0zM1 0h1v2H1zM3 0h1v2H3zM2 6h1v7h4v1H2z" fill="#fff" /></svg>
        <svg width="19" height="14" viewBox="0 0 19 14" className="ml-[10px]" fill="none" stroke="#fff" strokeWidth="1.200"><path d="M.6 4.500h2.500L7 1v12L3.100 9.500H.6zM11 4l6.500 6.500M17.500 4L11 10.500" /></svg>
        <svg width="17" height="17" viewBox="0 0 17 17" className="ml-[14px]" fill="none" stroke="#eee" strokeWidth="1.200"><path d="M1 16Q2 2 16 1M4 16.500Q5 5.500 16 5M7.500 16.500Q8 9 16 8.500M11 16.500q.5-4 5-4.500" /><circle cx="15" cy="15.500" r="1.200" fill="#fff" /></svg>
        <div className="ml-[8px] w-[38px] text-center text-[14.500px] leading-[22px] tracking-[-0.300px]">ENG<br />US</div>
        <div className="ml-[14px] w-[66px] whitespace-nowrap text-center text-[14.700px] leading-[22px] tracking-[-0.400px]">11:45 AM<br />2/1/2024</div>
        <svg width="32" height="34" viewBox="0 0 32 34" className="ml-[23px] mt-[6px]"><path d="M0 0h20v16h-7l-3 4v-4H0z" fill="#fff" /><path d="M4 4.500h12M4 8.500h12M4 12.500h9" stroke="#333" strokeWidth="1.300" /><circle cx="19.500" cy="20" r="9.800" fill="#3a3438" stroke="#a5a0a3" /><text x="19.500" y="25.500" fontSize="14" fill="#fff" textAnchor="middle" fontFamily="Open Sans, sans-serif">1</text></svg>
        <div className="ml-[14px] h-full w-px bg-[#8b7d83]" />
      </div>
    </div>
  );
}

export default function App() {
  return (
    <div className={`flex h-[1080px] w-[1920px] flex-col overflow-hidden ${UI}`}>
      <div className="h-[61px] bg-[linear-gradient(180deg,#4a4845_0px,#4a4845_18px,#8d8b89_34px,#d8d8d8_50px,#f0f0f0_61px)]">
        <TitleBar />
        <TabStrip />
      </div>
      <Ribbon />
      <FormulaBar />
      <div className="flex h-[803px]">
        <div className="flex w-[1896px] flex-col"><Sheet /><SheetTabs /></div>
        <VScroll />
      </div>
      <StatusBar />
      <Taskbar />
    </div>
  );
}
